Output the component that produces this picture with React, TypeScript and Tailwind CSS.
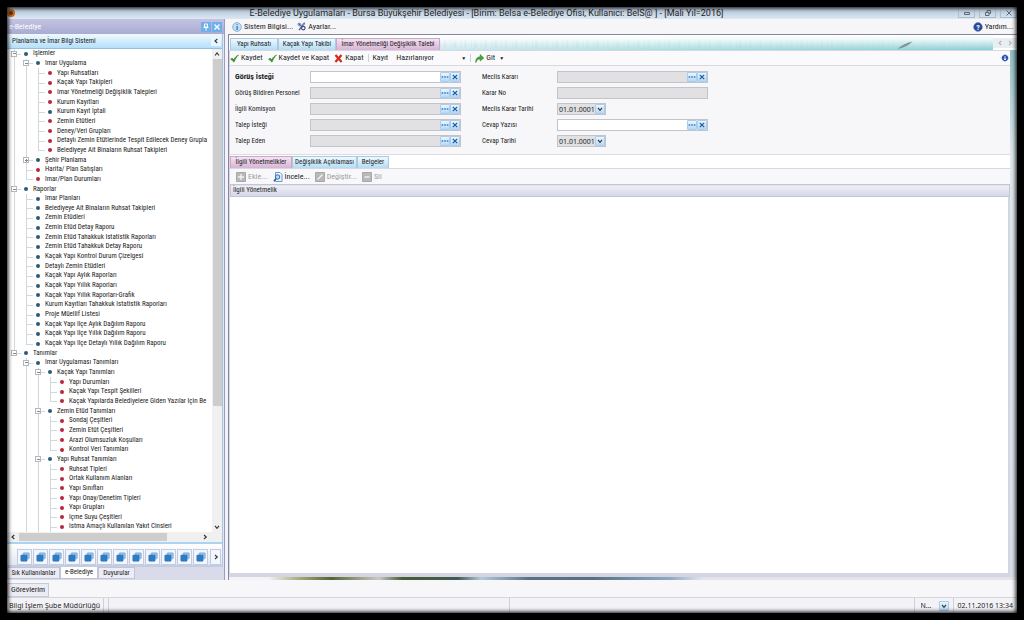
import { useId, type ReactNode } from 'react';
import { clsx } from 'clsx';

type TreeNode = {
  label: string;
  dot?: 'red' | 'blue';
  closed?: boolean;
  more?: boolean;
  children?: TreeNode[];
};

const red = (label: string): TreeNode => ({ label, dot: 'red' });
const blue = (label: string): TreeNode => ({ label, dot: 'blue' });

const tree: TreeNode[] = [
  {
    label: 'Işlemler',
    children: [
      {
        label: 'Imar Uygulama',
        children: [
          red('Yapı Ruhsatları'),
          red('Kaçak Yapı Takipleri'),
          red('Imar Yönetmeliği Değişiklik Talepleri'),
          red('Kurum Kayıtları'),
          blue('Kurum Kayıt İptali'),
          red('Zemin Etütleri'),
          red('Deney/Veri Grupları'),
          red('Detaylı Zemin Etütlerinde Tespit Edilecek Deney Grupla'),
          red('Belediyeye Ait Binaların Ruhsat Takipleri'),
        ],
      },
      { label: 'Şehir Planlama', closed: true },
      red('Harita/ Plan Satışları'),
      red('Imar/Plan Durumları'),
    ],
  },
  {
    label: 'Raporlar',
    children: [
      blue('Imar Planları'),
      blue('Belediyeye Ait Binaların Ruhsat Takipleri'),
      blue('Zemin Etüdleri'),
      blue('Zemin Etüd Detay Raporu'),
      blue('Zemin Etüd Tahakkuk Istatistik Raporları'),
      blue('Zemin Etüd Tahakkuk Detay Raporu'),
      blue('Kaçak Yapı Kontrol Durum Çizelgesi'),
      blue('Detaylı Zemin Etüdleri'),
      blue('Kaçak Yapı Aylık Raporları'),
      blue('Kaçak Yapı Yıllık Raporları'),
      blue('Kaçak Yapı Yıllık Raporları-Grafik'),
      blue('Kurum Kayıtları Tahakkuk Istatistik Raporları'),
      blue('Proje Müellif Listesi'),
      blue('Kaçak Yapı Ilçe Aylık Dağılım Raporu'),
      blue('Kaçak Yapı Ilçe Yıllık Dağılım Raporu'),
      blue('Kaçak Yapı Ilçe Detaylı Yıllık Dağılım Raporu'),
    ],
  },
  {
    label: 'Tanımlar',
    children: [
      {
        label: 'Imar Uygulaması Tanımları',
        more: true,
        children: [
          {
            label: 'Kaçak Yapı Tanımları',
            children: [
              red('Yapı Durumları'),
              red('Kaçak Yapı Tespit Şekilleri'),
              red('Kaçak Yapılarda Belediyelere Giden Yazılar Için Be'),
            ],
          },
          {
            label: 'Zemin Etüd Tanımları',
            children: [
              red('Sondaj Çeşitleri'),
              red('Zemin Etüt Çeşitleri'),
              red('Arazi Olumsuzluk Koşulları'),
              red('Kontrol Veri Tanımları'),
            ],
          },
          {
            label: 'Yapı Ruhsat Tanımları',
            more: true,
            children: [
              red('Ruhsat Tipleri'),
              red('Ortak Kullanım Alanları'),
              red('Yapı Sınıfları'),
              red('Yapı Onay/Denetim Tipleri'),
              red('Yapı Grupları'),
              red('Içme Suyu Çeşitleri'),
              { label: 'Istma Amaçlı Kullanılan Yakıt Cinsleri', dot: 'red', more: true },
            ],
          },
        ],
      },
    ],
  },
];

type Row = { node: TreeNode; lines: boolean[]; last: boolean };

function flatten(nodes: TreeNode[], lines: boolean[] = []): Row[] {
  return nodes.flatMap((node, i) => {
    const last = i === nodes.length - 1 && !node.more;
    return [{ node, lines, last }, ...flatten(node.children ?? [], [...lines, !last])];
  });
}

const rows = flatten(tree);

function TreeRow({ node, lines, last }: Row) {
  const folder = Boolean(node.children || node.closed);
  return (
    <li
      role="treeitem"
      aria-level={lines.length + 1}
      aria-expanded={folder ? !node.closed : undefined}
      className="flex min-h-[9px] flex-1 basis-0 items-stretch"
    >
      {lines.map((on, i) => (
        <span key={i} className="flex w-3 shrink-0 justify-center">
          {on && <span className="w-px bg-[#d3d6da]" />}
        </span>
      ))}
      <span className="relative flex w-3 shrink-0 items-center justify-center">
        <span className={clsx('absolute left-[6px] top-0 w-px bg-[#d3d6da]', last ? 'h-1/2' : 'h-full')} />
        <span className="absolute left-[6px] top-1/2 h-px w-[7px] bg-[#cfdadd]" />
        {folder && (
          <button
            type="button"
            aria-label={node.closed ? 'Genişlet' : 'Daralt'}
            className="relative flex size-[6px] items-center justify-center border border-[#b4b8be] bg-white"
          >
            <span className="h-px w-[3px] bg-[#888]" />
            {node.closed && <span className="absolute h-[3px] w-px bg-[#888]" />}
          </button>
        )}
      </span>
      <span className="flex w-3 shrink-0 items-center justify-center">
        <span className={clsx('size-[4px] rounded-full', node.dot === 'red' ? 'bg-[#b8283c]' : 'bg-[#2b5a78]')} />
      </span>
      <span className="flex items-center whitespace-nowrap pl-px leading-none">{node.label}</span>
    </li>
  );
}

function Chevron({ d, className }: { d: string; className?: string }) {
  return (
    <svg viewBox="0 0 6 6" className={clsx('size-[6px]', className)} fill="none" stroke="#333" strokeWidth="1.1" aria-hidden>
      <path d={d} />
    </svg>
  );
}

const UP = 'M1 4.5 3 2l2 2.5';
const DOWN = 'M1 1.8 3 4.3l2-2.5';
const LEFT = 'M4.3 1 2 3l2.3 2';
const RIGHT = 'M2 1l2.3 2L2 5';

function Check() {
  return (
    <svg viewBox="0 0 9 9" className="size-[9px]" aria-hidden>
      <path d="M.6 5.2 2 4l1.6 1.6C4.8 3.6 6.4 1.9 8.6.9 6.5 3 5.2 5.2 4 8.2Q2.3 6.4.6 5.2Z" fill="#3f9a2c" stroke="#2c7a1f" strokeWidth=".5" />
    </svg>
  );
}

function Cross() {
  return (
    <svg viewBox="0 0 9 9" className="size-[9px]" aria-hidden>
      <path d="M1.5 1 7.6 8M7.5 1 1.4 8" stroke="#d42a22" strokeWidth="2.2" />
    </svg>
  );
}

function GreenArrow() {
  return (
    <svg viewBox="0 0 9 9" className="size-[9px]" aria-hidden>
      <path d="M.8 8.6C.4 5 2 2.9 5.2 2.7V.5L8.8 4 5.2 7V5C3 5 1.6 6 .8 8.6Z" fill="#43a833" stroke="#27761d" strokeWidth=".5" />
    </svg>
  );
}

function RoundIcon({ mark, fill, ink = '#fff' }: { mark: string; fill: string; ink?: string }) {
  return (
    <svg viewBox="0 0 10 10" className="size-[10px]" aria-hidden>
      <circle cx="5" cy="5" r="4.4" fill={fill} stroke="#6f8fb8" strokeWidth=".6" />
      <text x="5" y="7.8" textAnchor="middle" fontSize="8" fontWeight="700" fill={ink}>{mark}</text>
    </svg>
  );
}

function Gears() {
  return (
    <svg viewBox="0 0 10 10" className="size-[9px]" aria-hidden>
      <path d="m1.5 1.5 3 3M8.5.8 2.2 9" stroke="#4b5f9c" strokeWidth="1.5" />
      <circle cx="2.6" cy="2.8" r="1.5" fill="none" stroke="#7687b5" />
      <circle cx="7" cy="6.8" r="2" fill="none" stroke="#3c4c86" strokeWidth="1.3" />
      <path d="M5 2.5h4" stroke="#8aa0cd" />
    </svg>
  );
}

function GrayIcon({ d }: { d: string }) {
  return (
    <svg viewBox="0 0 10 10" className="size-[10px]" aria-hidden>
      <path d="M.5.5h9v9h-9z" fill="#b9b9b9" stroke="#a8a8a8" />
      <path d={d} stroke="#f4f4f4" strokeWidth="1.3" fill="none" />
    </svg>
  );
}

function InspectIcon() {
  return (
    <svg viewBox="0 0 10 10" className="size-[10px]" aria-hidden>
      <path d="M2.5.5H7l2 2v7H2.5z" fill="#eef5ff" stroke="#6d95c9" />
      <circle cx="4.6" cy="5" r="2.2" fill="#b9dbf7" stroke="#2c6cb4" />
      <path d="M3 6.8.8 9.3" stroke="#2c5c9a" strokeWidth="1.4" />
    </svg>
  );
}

function ModuleIcon() {
  return (
    <svg viewBox="0 0 10 10" className="size-[10px]" aria-hidden>
      <rect x="3" y=".8" width="6.3" height="6" rx=".8" fill="#8fc0ec" stroke="#68a0d8" strokeWidth=".5" />
      <rect x=".8" y="3" width="6.3" height="6.2" rx=".8" fill="#2f7cc6" stroke="#2468ac" strokeWidth=".5" />
    </svg>
  );
}

const squareBtn =
  'flex h-[10px] w-[10px] shrink-0 items-center justify-center rounded-[1px] border border-[#a9cdea] bg-linear-to-b from-[#eaf6ff] to-[#b3dafa]';

function Field({ label, bold, open, picker = true }: { label: string; bold?: boolean; open?: boolean; picker?: boolean }) {
  const id = useId();
  return (
    <div className="flex h-3 items-center">
      <label htmlFor={id} className={clsx('w-[75px] shrink-0 whitespace-nowrap', bold && 'text-[8px] font-bold')}>
        {label}
      </label>
      <div className={clsx('flex h-3 w-[151px] items-center border border-[#c3c3ca]', open ? 'bg-white' : 'bg-[#e1e1e3]')}>
        <input id={id} readOnly={!open} className="h-full w-0 min-w-0 flex-1 bg-transparent px-0.5 outline-none" />
        {picker && (
          <>
            <button type="button" aria-label={`${label} seç`} className={squareBtn}>
              <svg viewBox="0 0 8 2" className="h-[2px] w-2" fill="#3f7db8" aria-hidden>
                <path d="M.6.2h1.6v1.6H.6zM3.2.2h1.6v1.6H3.2zM5.8.2h1.6v1.6H5.8z" />
              </svg>
            </button>
            <button type="button" aria-label={`${label} temizle`} className={squareBtn}>
              <svg viewBox="0 0 6 6" className="size-[6px]" stroke="#1c5a98" strokeWidth="1.2" aria-hidden>
                <path d="m.8.8 4.4 4.4M5.2.8.8 5.2" />
              </svg>
            </button>
          </>
        )}
      </div>
    </div>
  );
}

function Drop() {
  return (
    <span className="pointer-events-none absolute inset-y-0 right-0 flex items-center">
      <span className={squareBtn}>
        <Chevron d={DOWN} />
      </span>
    </span>
  );
}

function DateField({ label }: { label: string }) {
  const id = useId();
  return (
    <div className="flex h-3 items-center">
      <label htmlFor={id} className="w-[75px] shrink-0 whitespace-nowrap">{label}</label>
      <div className="relative h-3 w-[49px] border border-[#c3c3ca] bg-[#e1e1e3]">
        <select id={id} className="block h-full w-full appearance-none pl-px font-['Noto_Sans',sans-serif] text-[7px] leading-none outline-none">
          <option>01.01.0001</option>
        </select>
        <Drop />
      </div>
    </div>
  );
}

function Tab({ children, active, className }: { children: ReactNode; active?: boolean; className?: string }) {
  return (
    <button
      type="button"
      role="tab"
      aria-selected={Boolean(active)}
      className={clsx(
        'flex h-3 items-center justify-center whitespace-nowrap border border-b-0 leading-none',
        active
          ? 'border-[#c9a9c8] bg-linear-to-b from-[#f3e3f1] to-[#d9b3d6]'
          : 'border-[#a8cbe2] bg-linear-to-b from-[#eff9ff] to-[#b3dcf4]',
        className,
      )}
    >
      {children}
    </button>
  );
}

function ToolButton({ icon, children, disabled, className }: { icon?: ReactNode; children: ReactNode; disabled?: boolean; className?: string }) {
  return (
    <button
      type="button"
      disabled={disabled}
      className={clsx('flex items-center gap-0.5 whitespace-nowrap leading-none', disabled && 'text-[#9b9b9b]', className)}
    >
      {icon}
      {children}
    </button>
  );
}

function Sidebar() {
  return (
    <aside className="flex w-[218px] shrink-0 flex-col border-r border-[#9a9cc4] bg-[#e4e6f2]">
      <div className="flex h-[15px] items-center gap-px bg-linear-to-b from-[#c3c3e3] to-[#a9abd2] px-0.5 text-white">
        <span className="flex-1">e-Belediye</span>
        <button type="button" aria-label="Sabitle" className="flex size-[10px] items-center justify-center bg-[#6fb0ea]">
          <svg viewBox="0 0 8 8" className="size-2" stroke="#fff" fill="none" aria-hidden>
            <path d="M2.5 1h3v3h-3zM1.5 4.5h5M4 4.5V7.5" />
          </svg>
        </button>
        <button type="button" aria-label="Kapat" className="flex size-[10px] items-center justify-center bg-[#6fb0ea]">
          <svg viewBox="0 0 8 8" className="size-2" stroke="#fff" strokeWidth="1.4" aria-hidden>
            <path d="m1.5 1.5 5 5M6.5 1.5l-5 5" />
          </svg>
        </button>
      </div>
      <div className="mr-px flex flex-1 flex-col border-r border-[#a9c6de] bg-white">
        <div className="flex h-[15px] items-center justify-between border-b border-[#93c0e2] bg-linear-to-b from-[#effaff] to-[#b4dffa] pl-[5px] pr-px text-[7px]">
          <span className="whitespace-nowrap">Planlama ve İmar Bilgi Sistemi</span>
          <button type="button" aria-label="Paneli daralt" className="flex size-[10px] items-center justify-center bg-[#e9f6ff]">
            <Chevron d={LEFT} />
          </button>
        </div>
        <div className="flex flex-1 pl-px">
          <ul role="tree" className="flex w-0 flex-1 flex-col overflow-hidden text-[7px] text-[#222]">
            {rows.map((row, i) => (
              <TreeRow key={i} {...row} />
            ))}
          </ul>
          <div className="flex w-[10px] flex-col items-center bg-[#f0f0f0]">
            <Chevron d={UP} className="my-0.5" />
            <div className="w-[9px] flex-[345] bg-[#cdcdcd]" />
            <div className="flex-[116]" />
            <Chevron d={DOWN} className="my-0.5" />
          </div>
        </div>
        <div className="flex h-[10px] items-center bg-[#f0f0f0] pr-3">
          <Chevron d={LEFT} className="mx-[3px]" />
          <div className="h-2 flex-[152] bg-[#cdcdcd]" />
          <div className="flex-[34]" />
          <Chevron d={RIGHT} className="mx-0.5" />
        </div>
        <div className="flex h-[25px] items-center justify-end gap-px border-y-2 border-t-[#a9d5f2] border-b-[#c5cbe3] bg-linear-to-b from-white to-[#e3e7f4] pt-1 pr-px">
          {Array.from({ length: 12 }, (_, i) => (
            <button
              key={i}
              type="button"
              aria-label={`Modül ${i + 1}`}
              className="flex h-4 w-[15px] items-center justify-center border border-[#c2cce0] bg-[#f3f6fc]"
            >
              <ModuleIcon />
            </button>
          ))}
          <button type="button" aria-label="Diğer modüller" className="ml-px flex h-4 w-[11px] items-center justify-center border border-[#c2cce0] bg-[#f3f6fc]">
            <Chevron d={RIGHT} />
          </button>
        </div>
      </div>
      <div role="tablist" className="flex h-[13px] items-start bg-[#d9daea] text-[7px]">
        <button type="button" role="tab" className="h-3 w-[53px] whitespace-nowrap border border-[#c2c4d8] bg-[#ececf5] leading-none">Sık Kullanılanlar</button>
        <button type="button" role="tab" aria-selected className="h-3 w-[38px] whitespace-nowrap border border-t-0 border-[#c2c4d8] bg-white leading-none">e-Belediye</button>
        <button type="button" role="tab" className="h-3 w-[37px] whitespace-nowrap border border-[#c2c4d8] bg-[#ececf5] leading-none">Duyurular</button>
      </div>
    </aside>
  );
}

// Sea photo that shows through beside the document tabs
function SeaStrip() {
  return (
    <svg viewBox="0 0 570 14" preserveAspectRatio="none" className="h-full w-full" aria-hidden>
      <defs>
        <linearGradient id="sea" x2="0" y2="1">
          <stop offset="0" stopColor="#fff" stopOpacity="1" />
          <stop offset=".3" stopColor="#fff" stopOpacity=".85" />
          <stop offset="1" stopColor="#fff" stopOpacity=".1" />
        </linearGradient>
        <linearGradient id="water">
          <stop offset="0" stopColor="#c6e3ec" />
          <stop offset=".4" stopColor="#9fdcdc" />
          <stop offset="1" stopColor="#7cc8d0" />
        </linearGradient>
      </defs>
      <path d="M0 0h570v14H0z" fill="url(#water)" />
      <path d="M0 8h570" stroke="#8fb4c4" strokeWidth="7" strokeDasharray="1 3 2 5 1 2 3 4" opacity=".3" />
      <path d="M0 0h570v14H0z" fill="url(#sea)" />
      <path d="M472 13q5-5 15-7-5 5-15 7Z" fill="#7d9698" />
    </svg>
  );
}

function FormPanel() {
  return (
    <div className="flex gap-[21px] border-b border-[#dcdce2] bg-[#f7f7fa] pb-[7px] pl-[5px] pt-[5px] text-[7px]">
      <div className="flex flex-col gap-1">
        <Field label="Görüş İsteği" bold open />
        <Field label="Görüş Bildiren Personel" />
        <Field label="İlgili Komisyon" />
        <Field label="Talep İsteği" />
        <Field label="Talep Eden" />
      </div>
      <div className="flex flex-col gap-1">
        <Field label="Meclis Kararı" />
        <Field label="Karar No" picker={false} />
        <DateField label="Meclis Karar Tarihi" />
        <Field label="Cevap Yazısı" open />
        <DateField label="Cevap Tarihi" />
      </div>
    </div>
  );
}

function Workspace() {
  return (
    <main className="flex min-w-0 flex-1 flex-col">
      <nav className="flex h-[15px] items-center gap-1 bg-[#f6f6f9] pl-[7px] pr-1">
        <ToolButton icon={<RoundIcon mark="i" fill="#bfe0f7" ink="#1c6fb5" />}>Sistem Bilgisi...</ToolButton>
        <ToolButton icon={<Gears />}>Ayarlar...</ToolButton>
        <ToolButton className="ml-auto" icon={<RoundIcon mark="?" fill="#27459f" />}>Yardım...</ToolButton>
      </nav>
      <div className="ml-[3px] flex flex-1 flex-col border-l border-t border-[#85879c] bg-white">
        <div className="flex h-[15px] items-end">
          <div role="tablist" className="flex pl-px text-[7px]">
            <Tab className="w-[48px]">Yapı Ruhsatı</Tab>
            <Tab className="w-[58px]">Kaçak Yapı Takibi</Tab>
            <Tab active className="w-[104px]">İmar Yönetmeliği Değişiklik Talebi</Tab>
          </div>
          <div className="h-full min-w-0 flex-1">
            <SeaStrip />
          </div>
          <div className="flex h-[10px] w-6 items-center justify-center gap-1 self-center bg-[#e9eef2]">
            <Chevron d={LEFT} className="opacity-30" />
            <Chevron d={RIGHT} className="opacity-30" />
          </div>
        </div>
        <div className="flex flex-1">
          <div className="flex min-w-0 flex-1 flex-col border-l border-[#d5d6e6]">
            <div role="toolbar" className="flex h-4 items-center border-b border-t border-[#d8d8e0] bg-[#fafafc]">
              <ToolButton icon={<Check />}>Kaydet</ToolButton>
              <ToolButton className="ml-[5px]" icon={<Check />}>Kaydet ve Kapat</ToolButton>
              <ToolButton className="ml-[5px]" icon={<Cross />}>Kapat</ToolButton>
              <span className="mx-1 h-2 w-px bg-[#cfcfd6]" />
              <label htmlFor="state">Kayıt</label>
              <div className="relative ml-2 w-[70px]">
                <select id="state" className="block w-full appearance-none leading-none outline-none">
                  <option>Hazırlanıyor</option>
                </select>
                <span className="pointer-events-none absolute inset-y-0 right-0 flex items-center text-[5px]">▼</span>
              </div>
              <span className="mx-1 h-2 w-px bg-[#cfcfd6]" />
              <ToolButton icon={<GreenArrow />}>
                Git <span className="ml-0.5 text-[5px]">▼</span>
              </ToolButton>
              <button type="button" aria-label="Bilgi" className="ml-auto">
                <svg viewBox="0 0 10 10" className="size-[10px]" aria-hidden>
                  <path d="M5 .5 9.5 5 5 9.5.5 5Z" fill="#b8cdf0" />
                  <circle cx="5" cy="5" r="3" fill="#2747a8" />
                  <path d="M5 3v4M4 5.5l1 1.5 1-1.5" stroke="#fff" strokeWidth=".9" fill="none" />
                </svg>
              </button>
            </div>
            <FormPanel />
            <div role="tablist" className="flex h-[13px] items-end text-[7px]">
              <Tab active className="w-[62px]">İlgili Yönetmelikler</Tab>
              <Tab className="w-[65px]">Değişiklik Açıklaması</Tab>
              <Tab className="w-8">Belgeler</Tab>
            </div>
            <div role="toolbar" className="flex h-4 items-center gap-[5px] border-t border-[#d8d8e0] bg-[#f8f8fb] pl-[6px]">
              <ToolButton disabled icon={<GrayIcon d="M5 2v6M2 5h6" />}>Ekle...</ToolButton>
              <ToolButton icon={<InspectIcon />}>İncele...</ToolButton>
              <ToolButton disabled icon={<GrayIcon d="M2.5 7.5 7.5 2.5" />}>Değiştir...</ToolButton>
              <ToolButton disabled icon={<GrayIcon d="M2.5 5h5" />}>Sil</ToolButton>
            </div>
            <table className="w-full text-left text-[7px]">
              <thead>
                <tr>
                  <th className="h-3 border border-[#c5c5d8] bg-linear-to-b from-[#f0f0f7] to-[#d5d6e6] py-0 pl-0.5 font-normal leading-none">
                    İlgili Yönetmelik
                  </th>
                </tr>
              </thead>
            </table>
            <div className="flex-1 border-b-4 border-r-2 border-[#d4d5e3] bg-white" />
          </div>
          <div className="w-[7px] bg-linear-to-b from-[#8fc0c3] via-[#dfe8ee] via-20% to-[#d9dfe9]" />
        </div>
        <div className="h-[3px] bg-linear-[90deg,#f3f3f6_5%,#a3aa78_9%,#566433_13%,#c9c9c6_19%,#4a5c34_22%,#3f5a54_29%,#b4c9dc_32%,#5b7484_38%,#56707f_46%,#8fa9c4_56%,#e3e3ea_60%]" />
      </div>
    </main>
  );
}

function TitleBar() {
  return (
    <header className="flex h-3 items-center bg-linear-to-b from-[#aebfd2] to-[#dce8f3]">
      <span className="size-2 rounded-full border-2 border-[#c9641c] bg-[#5e3216]" />
      <h1 className="flex-1 whitespace-nowrap text-center font-['Roboto',sans-serif] text-[9px] leading-none text-[#222]">
        E-Belediye Uygulamaları - Bursa Büyükşehir Belediyesi - [Birim: Belsa e-Belediye Ofisi, Kullanıcı: BelS@ ] - [Mali Yıl=2016]
      </h1>
      <div className="flex gap-1">
        {['M1.5 3.5h5v2h-5z', 'M1.5 3.5h3.5v3h-3.5zM3 3.5v-2h3.5v3H5', 'm1.5 1.5 5 5m0-5-5 5'].map((d, i) => (
          <button key={d} type="button" aria-label={['Küçült', 'Önceki boyut', 'Kapat'][i]} className="flex h-[10px] w-[17px] items-center justify-center border border-[#aebccb]">
            <svg viewBox="0 0 8 8" className="size-2" fill="none" stroke="#5c6875" aria-hidden>
              <path d={d} />
            </svg>
          </button>
        ))}
      </div>
    </header>
  );
}

export default function App() {
  return (
    <div className="flex min-h-screen flex-col bg-black p-[7px] font-['Roboto_Condensed','Liberation_Sans',sans-serif] text-[8px] leading-none text-[#1c1c1c]">
      <div className="relative flex flex-1 flex-col overflow-hidden bg-[#f4f4f8]">
        <TitleBar />
        <div className="flex flex-1">
          <Sidebar />
          <Workspace />
        </div>
        <div className="flex h-[17px] items-end bg-[#f7f7fa]">
          <button type="button" className="h-[14px] whitespace-nowrap border border-[#c9cad8] bg-[#ececf4] px-[3px] leading-none">Görevlerim</button>
        </div>
        <footer className="flex h-4 items-stretch gap-1 border-t border-[#d5d5dd] bg-[#f3f3f7] font-['Noto_Sans',sans-serif] text-[7px]">
          <span className="flex w-[97px] items-center whitespace-nowrap border-r border-[#d0d0d8] pl-0.5">Bilgi İşlem Şube Müdürlüğü</span>
          <span className="flex-1 border-x border-[#d0d0d8]" />
          <span className="flex-1 border-r border-[#d0d0d8]" />
          <div className="relative my-px flex w-[30px] items-center">
            <select aria-label="Dil" className="block w-full appearance-none pl-0.5 leading-none outline-none">
              <option>N...</option>
            </select>
            <Drop />
          </div>
          <time className="flex items-center border-l border-[#d0d0d8] px-1">02.11.2016 13:34</time>
        </footer>
        <div className="pointer-events-none absolute inset-0 shadow-[inset_0_0_4px_1px_#000]" />
      </div>
    </div>
  );
}
